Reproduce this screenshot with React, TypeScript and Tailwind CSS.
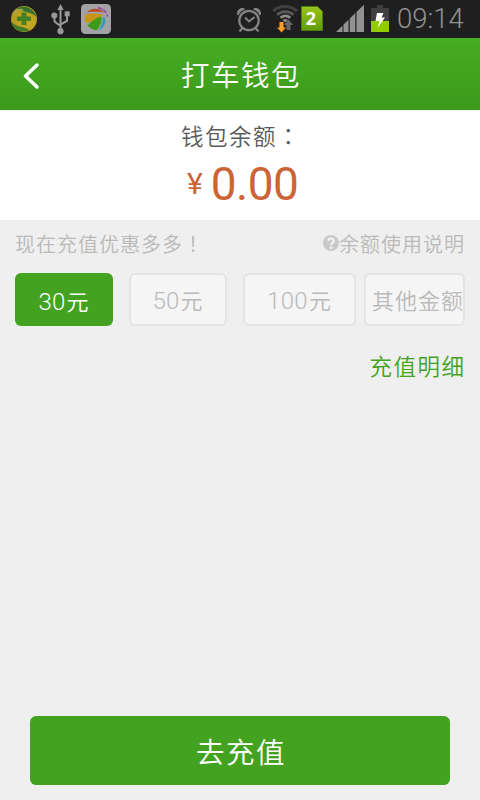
import clsx from 'clsx';

const amounts = [
  { label: '30', unit: '元', box: 'w-[98px] mr-4' },
  { label: '50', unit: '元', box: 'w-[98px] mr-4' },
  { label: '100', unit: '元', box: 'w-[113px] mr-2' },
  { label: '', unit: '其他金额', box: 'w-[101px]' },
];

const SecurityIcon = () => (
  <svg className="ml-[10px] h-[38px] w-7" viewBox="0 0 28 38">
    <defs>
      <radialGradient id="ball" cx="0.6" cy="0.6" r="0.6">
        <stop offset="0" stopColor="#cfaa20" />
        <stop offset="1" stopColor="#b39a22" />
      </radialGradient>
    </defs>
    <circle cx="14" cy="19" r="13" fill="url(#ball)" />
    <path d="M7 8.500C14 4 24 8 26.500 17 22 12 15 13 7 8.500z" fill="#36712f" />
    <path d="M1.500 22c4 5 12 4 18 8C12 34 4 30 1.500 22z" fill="#3f7b2c" />
    <path d="M4 14c2-4 6-5 9-4" fill="none" stroke="#a3a958" strokeWidth="1.500" />
    <path d="M11.500 12.500h5v4H21v4.500h-4.500v4h-5v-4H7v-4.500h4.500z" fill="#467f24" />
  </svg>
);

const UsbIcon = () => (
  <svg className="ml-[12px] h-[38px] w-[21px]" viewBox="0 0 21 38" fill="none" stroke="#999" strokeWidth="2">
    <path d="M10.500 9v22M10.500 26L4.500 21.500V16M10.500 24.500l6.500-3.500v-6" />
    <path d="M10.500 4l3.200 6H7.300z" fill="#999" stroke="none" />
    <circle cx="4.300" cy="15.500" r="3" fill="#999" stroke="none" />
    <path d="M14.700 11.300h5v5h-5z" fill="#999" stroke="none" />
    <circle cx="10.500" cy="31.200" r="3.100" fill="#999" stroke="none" />
  </svg>
);

const GalleryIcon = () => (
  <svg className="ml-[10px] h-[38px] w-[30px]" viewBox="0 0 30 38">
    <rect y="4" width="30" height="30" rx="4.500" fill="#a3a3a6" />
    <path d="M6 12.300c3.500-4.300 11.500-5 17 0-5.500-.6-11-.6-17 0z" fill="#b94a22" />
    <path d="M4.800 14.200c5.500-1 11.500-.7 17 .3-4 4.200-10 7.500-17 8.500C3 20 3.300 16.500 4.800 14.200z" fill="#c79518" />
    <path d="M6.500 25.200c3.500-3.800 8.500-7.300 14-8.800.5 5.500-1 9.600-4.500 13.600-4 .2-7.500-1.500-9.500-4.800z" fill="#3f9b17" />
    <path d="M22 17c1.200 0 2.200 1.200 2.400 2.500.4 4.800-2.400 9-7 11.500C20.500 26.500 22 22 22 17z" fill="#259dc2" />
    <path d="M17 7.700c3.700.3 7 2.500 8.500 5.800M26 14.500l.7 2" fill="none" stroke="#9b3fa9" strokeWidth="1.600" strokeDasharray="4.500 1" />
  </svg>
);

const AlarmIcon = () => (
  <svg className="ml-[125px] h-[38px] w-[26px]" viewBox="0 0 26 38" fill="none" stroke="#858585" strokeWidth="2">
    <circle cx="13" cy="20.500" r="9.700" strokeWidth="2.200" />
    <path d="M9 17.500l4 4 5.500-4.500M6.500 28L3.500 31.500M19.500 28l3 3.500" />
    <path d="M1 14.500c-.4-4 2.500-7.300 6.800-6.500L9 9.500C5.500 10.500 3.500 12.500 2.500 15.500zM25 14.500c.4-4-2.500-7.300-6.800-6.500L17 9.500c3.500 1 5.500 3 6.500 6z" fill="#858585" stroke="none" />
  </svg>
);

const WifiIcon = () => (
  <svg className="ml-[10px] h-[38px] w-[26px]" viewBox="0 0 26 38" fill="none">
    <path d="M1 11.200c7-6.200 17-6.200 24 0" stroke="#404040" strokeWidth="3" />
    <path d="M5 14.700c5-4.200 11.500-4.200 16.500 0" stroke="#585858" strokeWidth="2.800" />
    <path d="M8.500 17.800c3-2.300 6.800-2.300 9.800 0" stroke="#8b8b8b" strokeWidth="2.700" />
    <path d="M10.500 20c1.800-1.300 3.800-1.300 5.500 0l-2.800 2.500z" fill="#8b8b8b" />
    <path d="M7.500 22h4v5.500H14L9.500 32.500 5 27.500h2.500z" fill="#fb9d2c" />
    <path d="M14.500 30V25h-2.500l4.500-5.500 4.500 5.500h-2.500v5z" fill="#666" />
  </svg>
);

const SimIcon = () => (
  <svg className="ml-[3px] h-[38px] w-[22px]" viewBox="0 0 22 38">
    <defs>
      <linearGradient id="sim" x1="0" y1="0" x2="0" y2="1">
        <stop offset="0" stopColor="#98c41c" />
        <stop offset="1" stopColor="#639b0b" />
      </linearGradient>
    </defs>
    <path d="M.5 6.500h16l5 5v19H.5z" fill="url(#sim)" stroke="#507c0c" strokeWidth="1" />
    <text x="10" y="25" textAnchor="middle" fill="#fff" fontFamily="'Open Sans', sans-serif" fontSize="18" fontWeight="700">2</text>
  </svg>
);

const SignalIcon = () => (
  <svg className="ml-[13px] h-[38px] w-[28px]" viewBox="0 0 28 38" fill="#929292">
    <path d="M0 32l6.500-6.300V32zM7.500 32v-7.400l5-4.900V32zM13.800 32V18.500l5.500-5.400V32zM20.500 32V12L28 4.800V32z" />
  </svg>
);

const BatteryIcon = () => (
  <svg className="ml-[7px] h-[38px] w-[18px]" viewBox="0 0 18 38">
    <path d="M0 8h6V5h6v3h6v13H0z" fill="#404040" />
    <path d="M0 21h18v11H0z" fill="#93cc00" />
    <path d="M6 13h6.500l-2 4.500H14L6.500 28l2-7H4.500z" fill="#fff" />
  </svg>
);

const StatusBar = () => (
  <div className="flex h-[38px] bg-[#1f1f1f]">
    <SecurityIcon />
    <UsbIcon />
    <GalleryIcon />
    <AlarmIcon />
    <WifiIcon />
    <SimIcon />
    <SignalIcon />
    <BatteryIcon />
    <span className="ml-2 text-[27.5px] leading-[38px] text-[#929292] font-[350]">09:14</span>
  </div>
);

const App = () => (
  <div className="flex h-[800px] w-[480px] flex-col overflow-hidden bg-[#efefef] font-[Roboto,'Noto_Sans_CJK_SC',sans-serif]">
    <StatusBar />

    <header className="grid h-[72px] grid-cols-[60px_1fr_60px] items-center bg-linear-to-b from-[#47ad22] to-[#3c9a1b] text-white">
      <svg className="ml-[22px] mt-1 h-7 w-[18px]" viewBox="0 0 18 28" fill="none" stroke="#fff" strokeWidth="3.500" strokeLinecap="round" strokeLinejoin="round">
        <path d="M15 3L3.500 14 15 25" />
      </svg>
      <h1 className="pt-[5px] pl-[2px] text-center text-[28.5px] leading-[67px] font-[350] tracking-[1.5px]">打车钱包</h1>
    </header>

    {/* Balance */}
    <section className="h-[110px] bg-white">
      <p className="pt-[7px] pl-[181px] text-[22.5px] leading-9 font-[350] tracking-[1.5px] text-[#5a5a5a]">
        钱包余额<span className="font-['Noto_Sans_CJK_TC',sans-serif]">：</span>
      </p>
      <p className="flex pl-[187px] text-[#cb6437]">
        <span className="text-[30px] leading-[58px]">¥</span>
        <span className="ml-2 pt-px text-[46px] leading-[57px] tracking-[-0.5px]">0.00</span>
      </p>
    </section>

    <div className="flex h-[53px] px-[15px] text-[20px] leading-[48px] font-[350] tracking-[1px] text-[#b9b9b9]">
      <span>
        现在充值优惠多多<span className="font-['Noto_Sans_CJK_TC',sans-serif]">！</span>
      </span>
      <span className="ml-auto flex">
        <svg className="mt-[15px] h-4 w-4" viewBox="0 0 16 16">
          <circle cx="8" cy="8" r="8" fill="#c9c9c9" />
          <path d="M5.300 6c.1-3.300 5.500-3.300 5.400-.1 0 1.800-2.600 1.900-2.600 4" fill="none" stroke="#f5f5f5" strokeWidth="2" />
          <circle cx="8" cy="12.600" r="1.300" fill="#f5f5f5" />
        </svg>
        <span className="pt-px">余额使用说明</span>
      </span>
    </div>

    {/* Top-up amounts, first one selected */}
    <div className="flex h-[53px] px-[15px]">
      {amounts.map(({ label, unit, box }, i) => (
        <button
          key={unit + label}
          className={clsx(
            'shrink-0 overflow-hidden rounded-md text-center text-2xl whitespace-nowrap font-[350]',
            box,
            i === 0 ? 'bg-[#43a320] pt-1 text-white' : 'border-2 border-[#e4e4e4] bg-[#f5f5f5] pt-[2px] text-[#bababa]',
            i === 3 && 'pl-[5px] text-left',
          )}
        >
          <span className="tracking-[0.3px]">{label}</span>
          <span className="ml-px text-[22px] tracking-[1px]">{unit}</span>
        </button>
      ))}
    </div>

    <a className="mt-[23px] mr-[14.5px] self-end text-[22.5px] leading-9 font-[350] tracking-[1.5px] text-[#43a320]">充值明细</a>

    <button className="mx-[30px] mt-auto mb-[15px] h-[69px] rounded-md bg-[#43a320] pt-2 pl-[2px] text-[28.5px] font-[350] tracking-[1.5px] text-white">
      去充值
    </button>
  </div>
);

export default App;
